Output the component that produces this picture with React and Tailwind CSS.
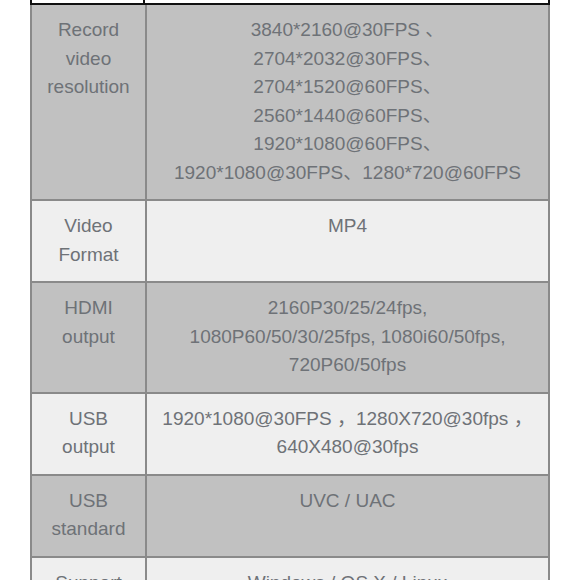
import React from "react";

const rows = [
  {
    label: ["Record", "video", "resolution"],
    value: [
      "3840*2160@30FPS 、",
      "2704*2032@30FPS、",
      "2704*1520@60FPS、",
      "2560*1440@60FPS、",
      "1920*1080@60FPS、",
      "1920*1080@30FPS、1280*720@60FPS",
    ],
    dark: true,
  },
  { label: ["Video", "Format"], value: ["MP4"], dark: false },
  {
    label: ["HDMI", "output"],
    value: [
      "2160P30/25/24fps,",
      "1080P60/50/30/25fps, 1080i60/50fps,",
      "720P60/50fps",
    ],
    dark: true,
  },
  {
    label: ["USB", "output"],
    value: ["1920*1080@30FPS ，1280X720@30fps ，", "640X480@30fps"],
    dark: false,
  },
  { label: ["USB", "standard"], value: ["UVC / UAC"], dark: true },
  { label: ["Support", "system"], value: ["Windows / OS X / Linux"], dark: false },
];

const SpecTable = () => {
  return (
    <div className="ml-[30px] w-[520px] text-[19px] leading-[28.5px] text-[#6e7277] font-['Liberation_Sans','Noto_Sans_CJK_SC',sans-serif]">
      {/* tail of the previous table */}
      <div className="flex h-[5px] bg-white border-l-2 border-r-2 border-b-2 border-[#111]">
        <div className="w-[113px] border-r-2 border-[#111]" />
        <div className="flex-1" />
      </div>
      <div className="border-l-2 border-r-2 border-[#8a8a8a]">
        {rows.map((row, i) => (
          <div
            key={i}
            className={`flex border-b-2 border-[#8a8a8a] ${
              row.dark ? "bg-[#c1c1c1]" : "bg-[#efefef]"
            }`}
          >
            <div className="w-[115px] shrink-0 border-r-2 border-[#8a8a8a] pt-[11px] pb-[12px] px-1 text-center">
              {row.label.map((l, j) => (
                <div key={j} className="h-[28.5px]">{l}</div>
              ))}
            </div>
            <div className="flex-1 pt-[11px] pb-[12px] px-2 text-center whitespace-pre">
              {row.value.map((v, j) => (
                <div key={j} className="h-[28.5px]">{v}</div>
              ))}
            </div>
          </div>
        ))}
      </div>
    </div>
  );
};

export default function App() {
  return (
    <div className="w-[580px] h-[580px] overflow-hidden bg-white">
      <SpecTable />
    </div>
  );
}
